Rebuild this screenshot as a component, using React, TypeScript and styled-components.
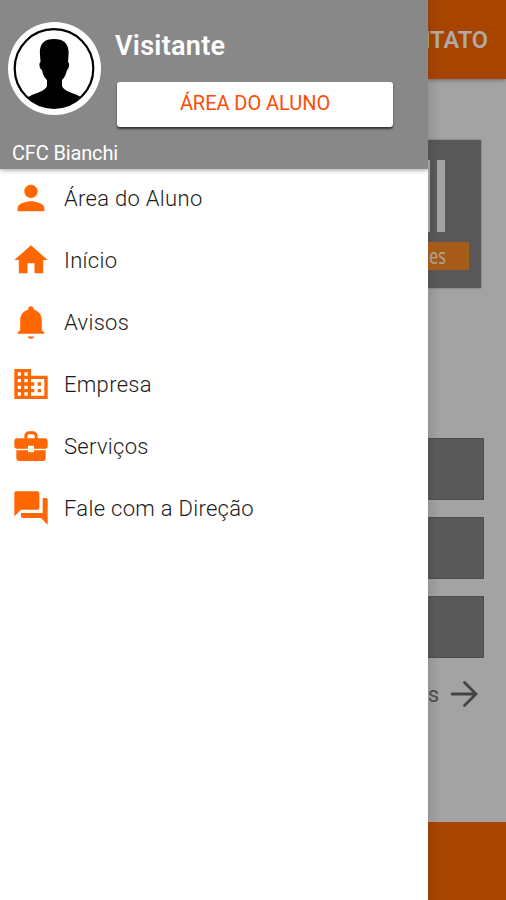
import React from "react";
import styled, { createGlobalStyle } from "styled-components";

const Global = createGlobalStyle`
  * { box-sizing: border-box; }
  body { margin: 0; font-family: Roboto, sans-serif; background: #a3a3a3; }
`;

const Screen = styled.div`
  display: flex;
  width: 506px;
  height: 900px;
  overflow: hidden;
`;

const Drawer = styled.aside`
  flex: 0 0 428px;
  display: flex;
  flex-direction: column;
  background: #fff;
`;

const Header = styled.header`
  height: 169px;
  flex: none;
  padding: 22px 0 0 8px;
  background: #888;
  color: #fff;
  box-shadow: 0 1px 5px rgba(0, 0, 0, 0.38);
  clip-path: inset(0 0 -10px 0);
`;

const Profile = styled.div`
  display: flex;
  height: 118px;
`;

const Avatar = styled.svg`
  width: 93px;
  height: 93px;
  flex: none;
`;

const Account = styled.div`
  margin-left: 16px;
  padding-top: 8px;
`;

const Name = styled.div`
  margin-left: -2px;
  height: 52px;
  font-size: 27px;
  line-height: 32px;
  font-weight: 600;
  letter-spacing: 0.3px;
`;

const AccessButton = styled.button`
  display: block;
  width: 276px;
  height: 45px;
  padding: 0 0 2px;
  border: 0;
  border-radius: 3px;
  background: #fff;
  color: #fc4c06;
  font: 400 20px/43px Roboto, sans-serif;
  letter-spacing: -0.05px;
  box-shadow: 0 2px 2px rgba(0, 0, 0, 0.6);
`;

const School = styled.div`
  margin-left: 4px;
  font-size: 20px;
  line-height: 26px;
  letter-spacing: -0.15px;
`;

const Menu = styled.nav`
  display: flex;
  flex-direction: column;
  padding: 0 0 0 11px;
  margin-top: -2px;
`;

const MenuItem = styled.a`
  display: flex;
  align-items: center;
  height: 62px;
  color: #1c1c1c;
`;

const MenuIcon = styled.svg`
  width: 40px;
  height: 40px;
  fill: #ff6702;
  flex: none;
`;

const MenuLabel = styled.span`
  margin-left: 13px;
  padding-top: 1px;
  font-size: 22px;
  font-weight: 350;
  line-height: 28px;
  letter-spacing: 0.3px;
  white-space: nowrap;
`;

const Page = styled.main`
  flex: 0 0 78px;
  display: flex;
  flex-direction: column;
  align-items: flex-start;
  overflow: hidden;
  background: linear-gradient(90deg, #959595, #a3a3a3 12px);
`;

const TopBar = styled.div`
  display: flex;
  justify-content: flex-end;
  align-items: center;
  width: 100%;
  height: 79px;
  flex: none;
  padding-right: 18px;
  background: linear-gradient(90deg, #993f04, #a74400 10px);
  box-shadow: 0 1px 4px rgba(0, 0, 0, 0.35);
  color: #b0a9a4;
  font-size: 23.5px;
  font-weight: 600;
`;

const Banner = styled.div`
  width: 53px;
  height: 148px;
  flex: none;
  margin-top: 61px;
  padding-top: 20px;
  background: linear-gradient(90deg, #515151, #585858 8px);
  box-shadow: 0 0 2px rgba(0, 0, 0, 0.4);
`;

const Bars = styled.div`
  display: flex;
  gap: 7px;
  height: 72px;
`;

const Bar = styled.div<{ $width: number }>`
  width: ${(p) => p.$width}px;
  background: #a2a2a2;
`;

const BannerTag = styled.div`
  display: flex;
  justify-content: flex-end;
  align-items: center;
  width: 41px;
  height: 28px;
  margin-top: 10px;
  padding-right: 23px;
  background: #a75b18;
  color: #aea79e;
  font: 21px/28px "Open Sans", sans-serif;
`;

const TagText = styled.span`
  transform: scaleX(0.76);
  transform-origin: right;
`;

const Tiles = styled.div`
  display: flex;
  flex-direction: column;
  gap: 17px;
  margin-top: 150px;
`;

const Tile = styled.div`
  width: 56px;
  height: 62px;
  background: linear-gradient(90deg, #515151, #595959 8px);
  border: 1px solid #4d4d4d;
  border-left: 0;
`;

const More = styled.div`
  display: flex;
  justify-content: flex-end;
  align-items: center;
  gap: 8px;
  width: 51px;
  height: 40px;
  margin-top: 16px;
  color: #4c4c4c;
  font-size: 22px;
  white-space: nowrap;
`;

const Arrow = styled.svg`
  width: 32px;
  height: 32px;
  flex: none;
  fill: none;
  stroke: #444;
  stroke-width: 2.8;
  stroke-linecap: round;
  stroke-linejoin: miter;
`;

const Footer = styled.footer`
  width: 100%;
  height: 78px;
  margin-top: auto;
  background: linear-gradient(90deg, #993f04, #a74400 8px);
`;

const items = [
  { label: "Área do Aluno", path: "M12 12c2.21 0 4-1.79 4-4s-1.79-4-4-4-4 1.79-4 4 1.790 4 4 4zm0 2c-2.67 0-8 1.34-8 4v2h16v-2c0-2.66-5.33-4-8-4z" },
  { label: "Início", path: "M9.900 20v-6h4.200v6h5.200v-8h2.700L12 3.200 2 12h2.700v8z" },
  { label: "Avisos", path: "M10 20.700h4c-.2.800-1 1.300-2 1.300s-1.800-.5-2-1.300zM18.500 17v-6c0-3.070-1.800-5.640-4.800-6.320V4c0-.83-.87-1.500-1.700-1.500s-1.700.67-1.700 1.500v.68C7.300 5.360 5.500 7.920 5.500 11v6L4 18.200v.9h16v-.9z" },
  { label: "Empresa", path: "M12 7V3H2v18h20V7H12zM6 19H4v-2h2v2zm0-4H4v-2h2v2zm0-4H4V9h2v2zm0-4H4V5h2v2zm4 12H8v-2h2v2zm0-4H8v-2h2v2zm0-4H8V9h2v2zm0-4H8V5h2v2zm10 12h-8v-2h2v-2h-2v-2h2v-2h-2V9h8v10zm-2-8h-2v2h2v-2zm0 4h-2v2h2v-2z" },
  { label: "Serviços", path: "M10.200 15.800v-1.200H3.200V19.300c0 1 .8 1.700 1.800 1.700h14c1 0 1.800-.7 1.800-1.700v-4.700h-7v1.200zM20.300 7.300H16V6.200c0-1.800-1.200-3-3-3h-2c-1.800 0-3 1.200-3 3v1.100H3.700C2.700 7.300 2 8 2 9v3.200c0 .9.700 1.500 1.600 1.500h6.600v-1.800h3.600v1.800h6.600c.9 0 1.600-.6 1.600-1.500V9c0-1-.7-1.700-1.700-1.700zM14.200 7.300H9.800V6.300c0-.9.500-1.300 1.300-1.300h1.800c.8 0 1.300.4 1.300 1.300z" },
  { label: "Fale com a Direção", path: "M21 6h-2v9H6v2c0 .55.45 1 1 1h11l4 4V7c0-.55-.45-1-1-1zm-4 6V3c0-.55-.45-1-1-1H3c-.55 0-1 .45-1 1v14l4-4h10c.55 0 1-.45 1-1z" },
];

export default function App() {
  return (
    <>
      <Global />
      <Screen>
        <Drawer>
          <Header>
            <Profile>
              <Avatar viewBox="0 0 93 93">
                <defs>
                  <clipPath id="portrait"><circle cx="46" cy="46.5" r="39" /></clipPath>
                </defs>
                <circle cx="46.5" cy="46.5" r="46.5" fill="#fff" />
                <circle cx="46" cy="46.5" r="39.3" fill="none" stroke="#000" strokeWidth="2.2" />
                <path clipPath="url(#portrait)" d="M46 17C36 17 31 22 32 33L32.500 40C30.500 41 31.500 47 34 48C35 53 36.500 56 39 58L39 64C37 70 27 70 17 77L17 90H76V77C66 70 56 70 54 64L54 58C57 55 58 52 59 48C61 47 62 41 60 40L60.500 33C61.500 22 56 17 46 17Z" />
              </Avatar>
              <Account>
                <Name>Visitante</Name>
                <AccessButton>ÁREA DO ALUNO</AccessButton>
              </Account>
            </Profile>
            <School>CFC Bianchi</School>
          </Header>
          <Menu>
            {items.map((item) => (
              <MenuItem key={item.label}>
                <MenuIcon viewBox="0 0 24 24"><path d={item.path} /></MenuIcon>
                <MenuLabel>{item.label}</MenuLabel>
              </MenuItem>
            ))}
          </Menu>
        </Drawer>
        <Page>
          <TopBar>CONTATO</TopBar>
          <Banner>
            <Bars>
              <Bar $width={2} />
              <Bar $width={8} />
            </Bars>
            <BannerTag><TagText>es</TagText></BannerTag>
          </Banner>
          <Tiles>
            <Tile />
            <Tile />
            <Tile />
          </Tiles>
          <More>
            s
            <Arrow viewBox="0 0 32 32"><path d="M5 16H29M17.500 4.500L29 16L17.500 27.500" /></Arrow>
          </More>
          <Footer />
        </Page>
      </Screen>
    </>
  );
}
